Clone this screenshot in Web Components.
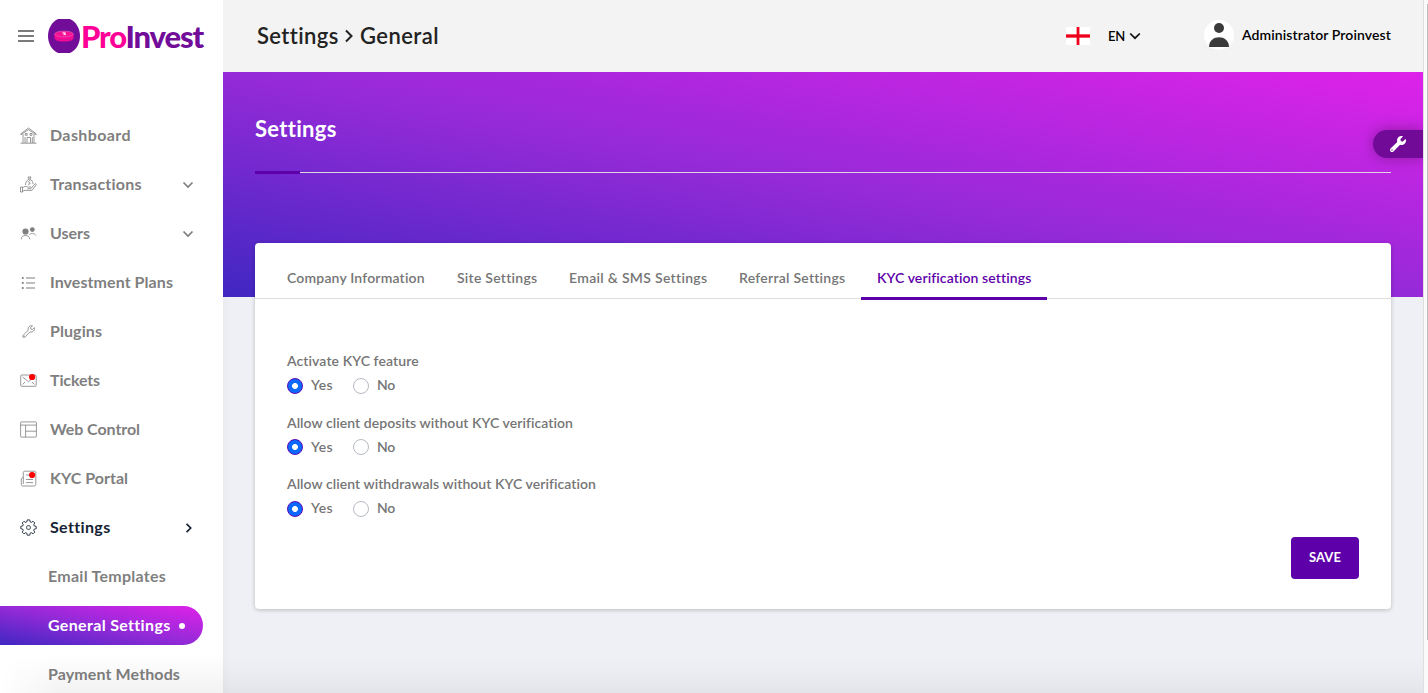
<!DOCTYPE html>
<html lang="en">
<head>
<meta charset="utf-8">
<title>ProInvest</title>
<style>
html,body{margin:0;height:100%;overflow:hidden}
body{font-family:Lato,"Open Sans",sans-serif;background:#eff0f5;color:#757575}
</style>
</head>
<body>
<app-shell>
  <side-bar slot="side"></side-bar>
  <top-bar slot="main"></top-bar>
  <page-banner slot="main"></page-banner>
  <settings-card slot="main"></settings-card>
</app-shell>
<script>
const define = (name, html, setup) => customElements.define(name, class extends HTMLElement {
  connectedCallback() {
    if (this.shadowRoot) return;
    const t = document.createElement('template');
    t.innerHTML = typeof html === 'function' ? html(this) : html;
    this.attachShadow({mode: 'open'}).append(t.content.cloneNode(true));
    if (setup) setup(this);
  }
});

/* A single line of text whose tracking is tuned to a fixed measure. */
define('tracked-text', `<style>:host{display:block;white-space:nowrap;flex:none;padding-bottom:2px}span{display:inline-block}</style><span><slot></slot></span>`, el => {
  const w = +el.getAttribute('w'), s = el.shadowRoot.querySelector('span');
  const natural = s.getBoundingClientRect().width, n = el.textContent.length;
  s.style.letterSpacing = (w - natural) / n + 'px';
  el.style.width = w + 'px';
});

const icons = {
  home: `<path d="M.8 6.8 8.500 1l7.700 5.800v1L8.500 2.600.8 7.800zM3 7v9M14 7v9M.5 16.200h16M5 16v-6M7 16v-5.500h3.500V16M12.300 16v-6M5.200 6.500v1.800h2V6.500zM10 6.500v1.800h2V6.500z"/>`,
  hand: `<path d="M8 1h3l-1 2H9zM9 3C6.500 4.500 5.500 6.500 5.500 9M10 3c2 1.200 3 3 3 5M10.500 4.800H9C8 5.500 8.300 6.300 9.500 6.600S10.300 8 9 8.200H8M.5 11h2v5h-2zM2.500 12c2-1.800 3.500-2 5-1h3c1 0 1 1.700 0 1.700H7.500M11.500 12l3.300-4c.8-.8 1.900 0 1.300 1l-4 5.300H5l-2.500.9"/>`,
  users: `<g fill="currentColor" stroke="none"><circle cx="5.500" cy="6.500" r="3.100"/><circle cx="12.300" cy="4.600" r="2.400"/></g><path d="M1.200 14.300c.3-3 2-3.800 4.300-3.800s4 .8 4.300 3.800M9.500 9.700c.8-1.600 5.300-2 6.200.8"/>`,
  list: `<path stroke-width="1.100" d="M6 4h9M6 9h9M6 14h9"/><g fill="currentColor" stroke="none"><circle cx="2.800" cy="4" r="1.100"/><circle cx="2.800" cy="9" r="1.100"/><circle cx="2.800" cy="14" r="1.100"/></g>`,
  wrench: `<path d="M12.500 2.900C10 2 7.500 4 8.300 7L3 12.500c-1 1.300.7 2.800 1.900 1.600l5.100-5.200c2.800.8 5.300-1.800 4.400-4.300l-2 1.900-1.500-.4-.4-1.500z"/><circle cx="4" cy="13.100" r=".3"/>`,
  mail: `<rect x=".7" y="3" width="15.500" height="11.300" rx="1"/><path d="m2.500 5 6 4.600 6-4.600M2.600 12.500 5 10M14.400 12.500 12 10"/><circle cx="12.100" cy="5" r="3.100" fill="#fe0000" stroke="none"/>`,
  layout: `<rect x=".6" y=".9" width="15.800" height="15.200" rx=".8"/><path d="M.6 4.100h15.800M5.600 4.100v12M5.600 10.200h10.800"/>`,
  news: `<path d="M3.300 14V2.700c0-1 .5-1.500 1.500-1.500h9.500c1 0 1.500.5 1.500 1.500v11.500c0 1-.6 1.800-1.600 1.800H3c-1.200 0-1.700-.7-1.700-1.700V9c0-.9.5-1.400 2-1.400M6 5h4M6 9.500h7M6 12.600h7"/><circle cx="12.100" cy="5" r="3.100" fill="#fe0000" stroke="none"/>`,
  gear: `<path stroke-width=".9" d="m7.300.9 2.400 0 .5 2 1.100.5 1.800-1.100 1.700 1.700-1.100 1.800.5 1.100 2 .5v2.300l-2 .5-.5 1.100 1.100 1.800-1.700 1.700-1.800-1.100-1.100.5-.5 2H7.300l-.5-2-1.100-.5-1.800 1.100-1.700-1.700 1.100-1.800-.5-1.100-2-.5V7.400l2-.5.5-1.100-1.100-1.800L3.900 2.300l1.800 1.100 1.100-.5z" stroke-linejoin="round"/><rect x="6.700" y="6.700" width="3.600" height="3.600" rx="1"/>`
};

define('menu-row', el => {
  const chev = el.getAttribute('chevron');
  return `<style>
  :host{display:flex;align-items:center;height:49px;padding-left:20px;box-sizing:border-box;font-size:16px;font-weight:700;color:#7f7f7f}
  :host([open]){color:#162334}
  .i{width:17px;height:17px;margin-right:13px;fill:none;stroke:currentColor;stroke-width:.8;flex:none}
  .c{width:12px;height:12px;fill:none;stroke:currentColor;stroke-width:1.700;margin-left:auto;margin-right:29px}
  </style><svg class="i" viewBox="0 0 17 17">${icons[el.getAttribute('icon')]}</svg>
  <tracked-text w="${el.getAttribute('w')}">${el.textContent}</tracked-text>
  ${chev ? `<svg class="c" viewBox="0 0 12 12"><path d="${chev === 'down' ? 'M1.500 3.500 6 8l4.500-4.500' : 'M4.500 1.900 8.700 6 4.500 10.200'}"/></svg>` : ''}`;
});

define('sub-row', el => `<style>
  :host{display:flex;align-items:center;height:39px;margin:5px 20px 5px 0;padding-left:48px;font-size:16px;font-weight:700;color:#7f7f7f}
  :host([active]){color:#fff;background:linear-gradient(to top right,#4027c1,#952ad8 50%,#df22ea);border-radius:0 20px 20px 0}
  i{width:6px;height:6px;border-radius:50%;background:#fff;margin-left:9px}
  </style><tracked-text w="${el.getAttribute('w')}">${el.textContent}</tracked-text>${el.hasAttribute('active') ? '<i></i>' : ''}`);

define('brand-logo', `<style>:host{display:flex;align-items:center}svg{display:block;flex:none}tracked-text{font:900 31px/40px Lato,sans-serif;color:#710d98;padding:0;margin-left:1px}b{font-weight:inherit;color:#ff0096}</style>
<svg width="32" height="36" viewBox="0 0 32 36">
<path d="M10 1h12c6 2.500 10 9.500 10 17s-4 14.500-10 17H10C4 32.500 0 25.500 0 18S4 3.500 10 1z" fill="#710d98"/>
<path d="M6.500 16v4c0 4.700 19 4.700 19 0v-4z" fill="#ff0896"/><ellipse cx="16" cy="16" rx="9.300" ry="2.900" fill="#f91093" stroke="#d65bb8" stroke-width=".7"/>
<path d="M7 20c3 2.500 15 2.500 18 0" stroke="#b3228f" stroke-width=".6" fill="none"/><path d="M14.500 14.800l3 .2-2 1 2.500.8" stroke="#fff" stroke-width=".9" fill="none"/></svg>
<tracked-text w="122"><b>Pro</b>Invest</tracked-text>`);

define('side-bar', `<style>
:host{display:block;width:223px;height:693px;background:#fff;overflow:hidden;position:relative}
header{display:flex;align-items:center;height:72px;padding-left:18px;box-sizing:border-box;margin-bottom:39px}
.b{width:16px;height:12px;margin-right:14px;flex:none}
.row{display:flow-root}
.fade{position:absolute;inset:auto 0 0 0;height:38px;background:linear-gradient(#0000,#0000000d);-webkit-mask:linear-gradient(90deg,transparent,#000 60px)}
</style>
<header><svg class="b" viewBox="0 0 16 12"><path d="M0 1h16M0 6h16M0 11h16" stroke="#7b7b7b" stroke-width="1.800"/></svg><brand-logo></brand-logo></header>
<nav>
<menu-row icon="home" w="81">Dashboard</menu-row>
<menu-row icon="hand" w="92" chevron="down">Transactions</menu-row>
<menu-row icon="users" w="40" chevron="down">Users</menu-row>
<menu-row icon="list" w="123">Investment Plans</menu-row>
<menu-row icon="wrench" w="52">Plugins</menu-row>
<menu-row icon="mail" w="50">Tickets</menu-row>
<menu-row icon="layout" w="90">Web Control</menu-row>
<menu-row icon="news" w="78">KYC Portal</menu-row>
<menu-row icon="gear" w="60" chevron="right" open>Settings</menu-row>
<div class="row"><sub-row w="118">Email Templates</sub-row></div>
<div class="row"><sub-row w="122" active>General Settings</sub-row></div>
<div class="row"><sub-row w="132">Payment Methods</sub-row></div>
</nav><div class="fade"></div>`);

define('top-bar', `<style>
:host{display:flex;align-items:center;height:72px;padding:0 32px 0 34px;box-sizing:border-box;background:#f3f3f3;color:#000}
h1{display:flex;align-items:center;gap:7px;margin:0 auto 0 0;font-size:22px;font-weight:600;color:#222}
svg{display:block;flex:none;fill:none}
.t{font-size:14px;font-weight:600}.name{padding-bottom:3px}.en{font-size:13px;margin:0 4px 0 18px;padding-bottom:0}
.av{width:30px;height:30px;margin:-2px 8px 0 63px}
</style>
<h1><tracked-text w="81">Settings</tracked-text><svg width="8" height="14" viewBox="0 0 8 14"><path d="m1 1.500 5.500 5.500L1 12.500" stroke="#222" stroke-width="2"/></svg><tracked-text w="79">General</tracked-text></h1>
<svg width="24" height="18"><rect width="24" height="18" rx="1" fill="#fff"/><path d="M0 9h24" stroke="#f7909b" stroke-width="3.600"/><path d="M0 9h24M12 0v18" stroke="#ed001b" stroke-width="2.800"/></svg>
<tracked-text class="t en" w="17">EN</tracked-text>
<svg width="12" height="12"><path d="m1.200 3.500 4.800 4.700 4.800-4.700" stroke="#111" stroke-width="1.700"/></svg>
<svg class="av" viewBox="0 0 30 30"><circle cx="15" cy="15" r="15" fill="#fff"/><circle cx="15" cy="8" r="5" fill="#3b3b3b"/><path d="M5 27c0-13 20-13 20 0z" fill="#3b3b3b"/></svg>
<tracked-text class="t name" w="149">Administrator Proinvest</tracked-text>`);

define('page-banner', `<style>
:host{display:block;position:relative;height:225px;box-sizing:border-box;padding:43px 32px 0;background:linear-gradient(to top right,#4027c1,#952ad8 50%,#df22ea);color:#fff}
h2{margin:0 0 28px;font-size:22px;line-height:28px;height:28px;font-weight:700}
.rule{height:3px;display:flex;align-items:center}
.rule b{width:45px;height:3px;background:#5e00a9}.rule i{flex:1;height:1px;background:#dfd5e2}
.tool{position:absolute;right:0;top:58px;width:50px;height:28px;border-radius:14px 0 0 14px;background:#720a98;box-shadow:0 0 14px #0000004d;clip-path:inset(-20px 0 -20px -20px);display:flex;align-items:center;justify-content:center}
</style><h2><tracked-text w="81">Settings</tracked-text></h2><div class="rule"><b></b><i></i></div>
<div class="tool"><svg width="16" height="16" viewBox="0 0 512 512"><path fill="#fff" d="M507.700 109.100c-2.200-9-13.500-12.100-20.100-5.500l-74.400 74.400-67.900-11.300L334 98.900l74.400-74.400c6.600-6.600 3.400-17.900-5.700-20.200-47.400-11.700-99.600.9-136.600 37.900-39.600 39.600-50.500 97.100-34.100 147.200L18.700 402.800c-25 25-25 65.500 0 90.500s65.500 25 90.500 0l213.200-213.200c50.100 16.700 107.500 5.700 147.400-34.200 37.100-37.100 49.700-89.300 37.900-136.800zM64 472c-13.200 0-24-10.800-24-24s10.700-24 24-24 24 10.700 24 24-10.700 24-24 24z"/></svg></div>`);

define('tab-item', el => `<style>
:host{display:flex;align-items:center;padding:17px 16px 0;height:57px;box-sizing:border-box;border-bottom:3px solid transparent;font-size:14px;font-weight:600;margin-bottom:-1px}
:host([active]){color:#5e00a9;border-color:#5e00a9}
</style><tracked-text w="${el.getAttribute('w')}">${el.textContent}</tracked-text>`);

define('yes-no', el => `<style>
:host{display:block;height:61.500px;font-size:14px;font-weight:600}
div{display:flex;align-items:center;height:24px}
i{box-sizing:border-box;width:16px;height:16px;border:1px solid #b5bac4;border-radius:50%;margin-right:8px;flex:none}
.on{border-color:#5c07b5;background:radial-gradient(circle,#fff 2.600px,#0c69fc 3.300px)}
.y{margin-right:20px}
</style><div><tracked-text w="${el.getAttribute('w')}">${el.textContent}</tracked-text></div>
<div><i class="on"></i><tracked-text class="y" w="22">Yes</tracked-text><i></i><tracked-text w="18">No</tracked-text></div>`);

define('settings-card', `<style>
:host{display:block;position:relative;margin:-54px 32px 0;height:366px;background:#fff;border-radius:4px;box-shadow:0 1px 4px #00000038}
.tabs{display:flex;height:55px;padding-left:16px;border-bottom:1px solid #dedede}
form{display:flex;flex-direction:column;padding:50.500px 32px 0}
button{align-self:flex-end;width:68px;height:42px;margin-top:3px;border:0;border-radius:4px;background:#5e00a9;color:#fff;font:700 13px Lato,sans-serif;padding:0;display:flex;align-items:center;justify-content:center}
</style>
<div class="tabs"><tab-item w="138">Company Information</tab-item><tab-item w="80">Site Settings</tab-item><tab-item w="138">Email &amp; SMS Settings</tab-item><tab-item w="106">Referral Settings</tab-item><tab-item w="154" active>KYC verification settings</tab-item></div>
<form><yes-no w="132">Activate KYC feature</yes-no><yes-no w="286">Allow client deposits without KYC verification</yes-no><yes-no w="309">Allow client withdrawals without KYC verification</yes-no>
<button type="button"><tracked-text w="32">SAVE</tracked-text></button></form>`);

define('app-shell', `<style>
:host{display:grid;grid-template-columns:223px 1200px 5px;height:693px;position:relative}
main{min-width:0;background:linear-gradient(90deg,#e9ebef,#eff0f5 8px)}
.scroll{background:#fafafa;border-left:1px solid #dfdfdf;box-sizing:border-box;display:flex;justify-content:flex-end}
.scroll i{width:1px;height:636px;margin-top:4px;background:#bdbdbd}
.shade{position:absolute;left:223px;right:5px;bottom:0;height:35px;background:linear-gradient(#0000,#00000008 75%,#0000000d)}
</style><slot name="side"></slot><main><slot name="main"></slot></main><div class="scroll"><i></i></div><div class="shade"></div>`);
</script>
</body>
</html>
